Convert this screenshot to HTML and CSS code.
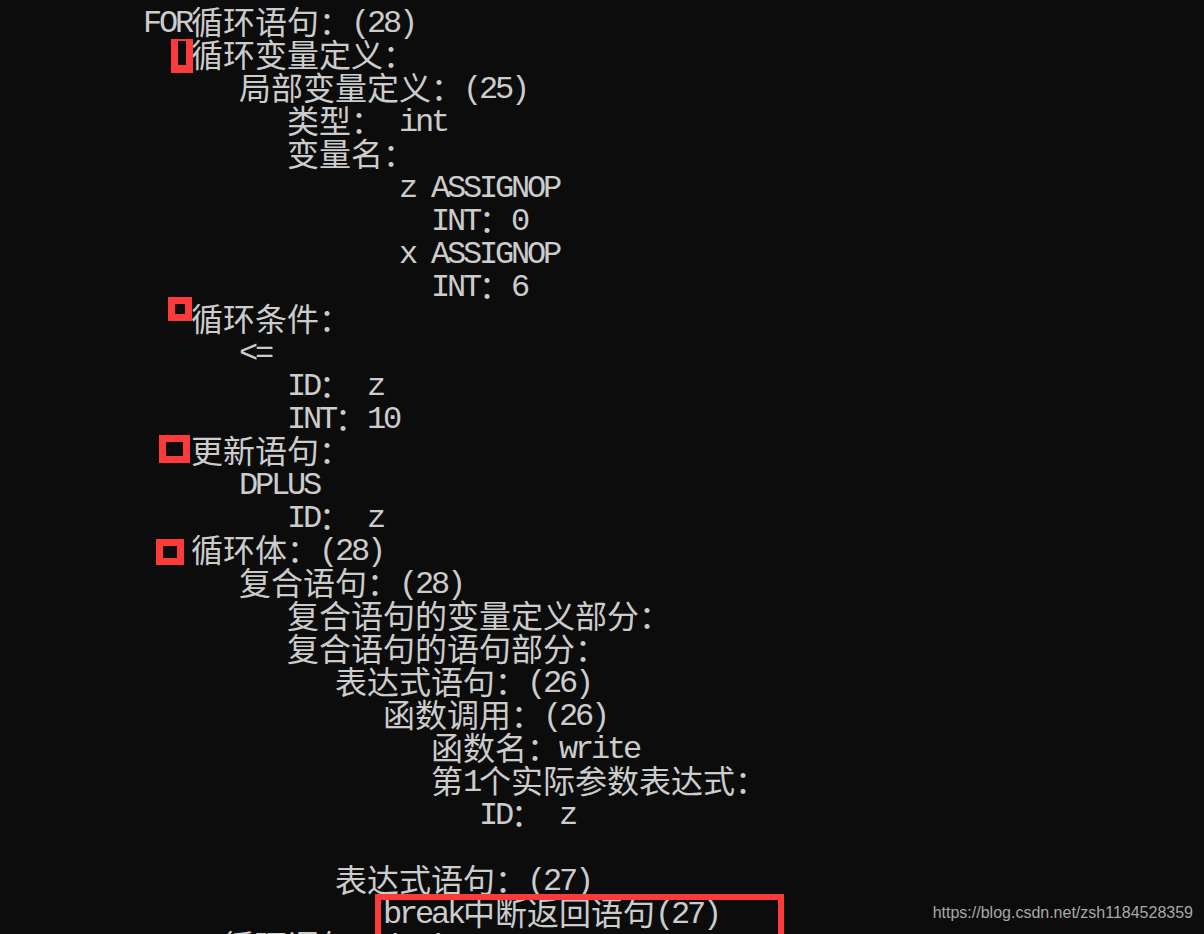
FILE: index.html
```html
<!DOCTYPE html>
<html lang="zh">
<head>
<meta charset="utf-8">
<title>console</title>
<link rel="stylesheet" href="styles.css">
</head>
<body>
<div class="console">
  <div class="ln">FOR<span class="k">循环语句：</span>(28)</div>
  <div class="ln">   <span class="k">循环变量定义：</span><span class="mark m1"></span></div>
  <div class="ln">      <span class="k">局部变量定义：</span>(25)</div>
  <div class="ln">         <span class="k">类型：</span> int</div>
  <div class="ln">         <span class="k">变量名：</span></div>
  <div class="ln">                z ASSIGNOP</div>
  <div class="ln">                  INT<span class="k">：</span>0</div>
  <div class="ln">                x ASSIGNOP</div>
  <div class="ln">                  INT<span class="k">：</span>6</div>
  <div class="ln">   <span class="k">循环条件：</span><span class="mark m2"></span></div>
  <div class="ln">      &lt;=</div>
  <div class="ln">         ID<span class="k">：</span> z</div>
  <div class="ln">         INT<span class="k">：</span>10</div>
  <div class="ln">   <span class="k">更新语句：</span><span class="mark m3"></span></div>
  <div class="ln">      DPLUS</div>
  <div class="ln">         ID<span class="k">：</span> z</div>
  <div class="ln">   <span class="k">循环体：</span>(28)<span class="mark m4"></span></div>
  <div class="ln">      <span class="k">复合语句：</span>(28)</div>
  <div class="ln">         <span class="k">复合语句的变量定义部分：</span></div>
  <div class="ln">         <span class="k">复合语句的语句部分：</span></div>
  <div class="ln">            <span class="k">表达式语句：</span>(26)</div>
  <div class="ln">               <span class="k">函数调用：</span>(26)</div>
  <div class="ln">                  <span class="k">函数名：</span>write</div>
  <div class="ln">                  <span class="k">第</span>1<span class="k">个实际参数表达式：</span></div>
  <div class="ln">                     ID<span class="k">：</span> z</div>
  <div class="ln"> </div>
  <div class="ln">            <span class="k">表达式语句：</span>(27)</div>
  <div class="ln">               break<span class="k">中断返回语句</span>(27)<span class="mark m5"></span></div>
  <div class="ln">     <span class="k">循环语句：</span>(28)</div>
</div>
<div class="watermark">https://blog.csdn.net/zsh1184528359</div>
</body>
</html>
```
FILE: styles.css
```css
html, body {
  margin: 0;
  padding: 0;
  background: #0c0c0c;
  height: 100%;
  overflow: hidden;
}
.console {
  padding: 7px 0 0 143px;
  font-family: "Liberation Mono", monospace;
  font-size: 32px;
  letter-spacing: -3.2px;
  color: #cccccc;
}
.ln {
  position: relative;
  height: 33px;
  line-height: 33px;
  white-space: pre;
}
.k {
  font-family: "Noto Sans CJK SC", sans-serif;
  letter-spacing: 0;
  line-height: 0;
  vertical-align: -2px;
}
.mark {
  position: absolute;
  box-sizing: border-box;
  border: 7px solid #fd3a3a;
}
.m1 { left: 28px; top: -1px; width: 22px; height: 34px; border-width: 2px 7px 8px 7px; }
.m2 { left: 25px; top: -7px; width: 24px; height: 24px; }
.m3 { left: 16px; top: -1px; width: 31px; height: 28px; }
.m4 { left: 13px; top: 4px; width: 28px; height: 26px; }
.m5 { left: 232px; top: -4px; width: 409px; height: 60px; border-width: 6px; }
.watermark {
  position: absolute;
  right: 11px;
  top: 903px;
  font-family: "Liberation Sans", Arial, sans-serif;
  font-size: 16px;
  line-height: 20px;
  color: #a8a8a8;
}
```
